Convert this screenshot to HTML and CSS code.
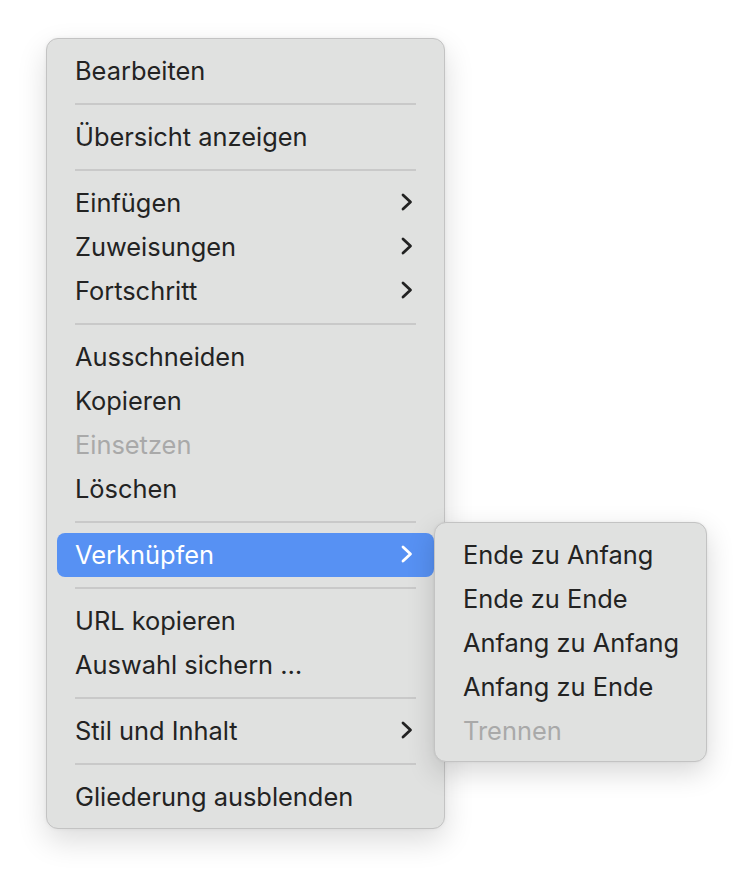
FILE: index.html
```html
<!DOCTYPE html>
<html lang="de">
<head>
<meta charset="utf-8">
<title>Kontextmenü</title>
<link rel="stylesheet" href="styles.css">
</head>
<body>
<div class="stage">
  <div class="menu main">
    <div class="item">Bearbeiten</div>
    <div class="sep"></div>
    <div class="item">Übersicht anzeigen</div>
    <div class="sep"></div>
    <div class="item">Einfügen<svg class="chev" viewBox="0 0 12 18"><path d="M2 2 L9.5 9 L2 16"/></svg></div>
    <div class="item">Zuweisungen<svg class="chev" viewBox="0 0 12 18"><path d="M2 2 L9.5 9 L2 16"/></svg></div>
    <div class="item">Fortschritt<svg class="chev" viewBox="0 0 12 18"><path d="M2 2 L9.5 9 L2 16"/></svg></div>
    <div class="sep"></div>
    <div class="item">Ausschneiden</div>
    <div class="item">Kopieren</div>
    <div class="item disabled">Einsetzen</div>
    <div class="item">Löschen</div>
    <div class="sep"></div>
    <div class="item active">Verknüpfen<svg class="chev" viewBox="0 0 12 18"><path d="M2 2 L9.5 9 L2 16"/></svg>
      <div class="menu sub">
        <div class="item">Ende zu Anfang</div>
        <div class="item">Ende zu Ende</div>
        <div class="item">Anfang zu Anfang</div>
        <div class="item">Anfang zu Ende</div>
        <div class="item disabled">Trennen</div>
      </div>
    </div>
    <div class="sep"></div>
    <div class="item">URL kopieren</div>
    <div class="item">Auswahl sichern …</div>
    <div class="sep"></div>
    <div class="item">Stil und Inhalt<svg class="chev" viewBox="0 0 12 18"><path d="M2 2 L9.5 9 L2 16"/></svg></div>
    <div class="sep"></div>
    <div class="item">Gliederung ausblenden</div>
  </div>
</div>
</body>
</html>
```
FILE: styles.css
```css
html, body {
  margin: 0;
  padding: 0;
  background: #ffffff;
}
body {
  font-family: Inter, "Noto Sans", "Liberation Sans", sans-serif;
  -webkit-font-smoothing: antialiased;
}
.stage {
  padding: 38px 0 0 46px;
  min-height: 882px;
  box-sizing: border-box;
}
.menu {
  background: #e0e1e0;
  border: 1px solid #c3c3c3;
  border-radius: 12px;
  box-shadow: 0 12px 30px rgba(0,0,0,0.14), 0 0 4px rgba(0,0,0,0.05);
  box-sizing: border-box;
}
.main {
  width: 399px;
  padding: 10px 10px 9px 10px;
}
.item {
  position: relative;
  height: 44px;
  box-sizing: border-box;
  display: flex;
  align-items: center;
  justify-content: space-between;
  padding: 0 21px 2px 18px;
  font-size: 25.4px;
  color: #232323;
  border-radius: 8px;
  white-space: nowrap;
}
.item.disabled {
  color: #a9a9a9;
}
.item.active {
  background: #5791f3;
  color: #ffffff;
}
.sep {
  height: 22px;
  display: flex;
  align-items: center;
  padding: 0 18px;
}
.sep::before {
  content: "";
  display: block;
  width: 100%;
  height: 2px;
  background: #c9c9c9;
}
.chev {
  width: 12px;
  height: 18px;
  fill: none;
  stroke: #222222;
  stroke-width: 2.8;
  stroke-linecap: round;
  stroke-linejoin: round;
}
.active .chev {
  stroke: #ffffff;
}
.sub {
  position: absolute;
  left: 377px;
  top: -11px;
  width: 273px;
  padding: 10px 10px 8px 10px;
  z-index: 2;
  box-shadow: 0 10px 28px rgba(0,0,0,0.16), 0 0 3px rgba(0,0,0,0.06);
}
.sub .item {
  color: #232323;
}
.sub .item.disabled {
  color: #a9a9a9;
}
```
